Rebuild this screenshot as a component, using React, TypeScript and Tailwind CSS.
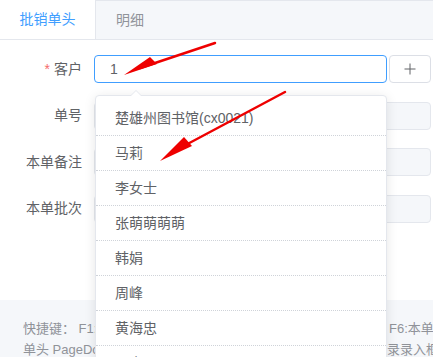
const font = { fontFamily: '"Liberation Sans", "Noto Sans CJK SC", sans-serif' };

const options = ["楚雄州图书馆(cx0021)", "马莉", "李女士", "张萌萌萌萌", "韩娟", "周峰", "黄海忠", "王小明"];

function Row({ label, required, children }: { label: string; required?: boolean; children: React.ReactNode }) {
  return (
    <div className="flex items-center h-[28px]">
      <div className="w-[94px] pr-3 text-right text-[14px] text-[#606266]">
        {required && <span className="text-[#f56c6c] mr-1">*</span>}
        {label}
      </div>
      {children}
    </div>
  );
}

export default function App() {
  return (
    <div className="relative w-[433px] h-[357px] overflow-hidden bg-white" style={font}>
      {/* tabs */}
      <div className="flex h-[40px] border-b border-[#e4e7ed]">
        <div className="w-[95px] flex items-center justify-center text-[14px] text-[#409eff] bg-white">批销单头</div>
        <div className="flex-1 flex items-center bg-[#f5f7fa] border-l border-t border-[#e4e7ed] pl-[20px] text-[14px] text-[#909399]">
          明细
        </div>
      </div>

      {/* form */}
      <div className="h-[260px] pt-[15px] flex flex-col gap-[18.5px]">
        <Row label="客户" required>
          <div className="w-[293px] h-[28px] border border-[#409eff] rounded flex items-center pl-[15px] text-[14px] text-[#606266]">
            1
          </div>
          <div className="ml-[2px] w-[42px] h-[28px] border border-[#dcdfe6] rounded flex items-center justify-center">
            <svg width="12" height="12" viewBox="0 0 12 12">
              <path d="M6 0.5V11.5M0.5 6H11.5" stroke="#606266" strokeWidth="1" />
            </svg>
          </div>
        </Row>
        <Row label="单号">
          <div className="w-[337px] h-[28px] bg-[#f5f7fa] border border-[#e4e7ed] rounded" />
        </Row>
        <Row label="本单备注">
          <div className="w-[337px] h-[28px] bg-[#f5f7fa] border border-[#e4e7ed] rounded" />
        </Row>
        <Row label="本单批次">
          <div className="w-[337px] h-[28px] bg-[#f5f7fa] border border-[#e4e7ed] rounded" />
        </Row>
      </div>

      {/* footer */}
      <div className="h-[57px] bg-[#f5f7fa] pt-[18px] pl-[23px] text-[13px] leading-[21px] text-[#909399] whitespace-nowrap">
        <div className="flex">
          <span className="w-[366px] shrink-0 overflow-hidden">快捷键： F1:新增 F2:保存 F3:审核 F4:打印 F5:启用</span>
          <span className="shrink-0">F6:本单备注</span>
        </div>
        <div className="flex">
          <span className="w-[364px] shrink-0 overflow-hidden">单头 PageDown:切换到明细 回车:跳到明细记</span>
          <span className="shrink-0">录录入框</span>
        </div>
      </div>

      {/* dropdown */}
      <div className="absolute left-[95px] top-[95px] w-[292px] bg-white border border-[#e4e7ed] rounded shadow-[0_2px_12px_rgba(0,0,0,0.1)] pt-[5px]">
        <div className="absolute -top-[6px] left-[34px] w-0 h-0 border-l-[6px] border-r-[6px] border-b-[6px] border-l-transparent border-r-transparent border-b-[#e4e7ed]" />
        <div className="absolute -top-[5px] left-[34px] w-0 h-0 border-l-[6px] border-r-[6px] border-b-[6px] border-l-transparent border-r-transparent border-b-white" />
        {options.map((o) => (
          <div key={o} className="h-[35px] flex items-center pl-[19px] text-[14px] text-[#606266] border-b border-dotted border-[#cfd3d9]">
            {o}
          </div>
        ))}
      </div>

      {/* annotation arrows */}
      <svg className="absolute inset-0 pointer-events-none" width="433" height="357">
        <line x1="215" y1="43" x2="140" y2="68" stroke="#ee0000" strokeWidth="2.5" strokeLinecap="round" />
        <polygon points="124,75 150,57 157,64" fill="#ee0000" />
        <line x1="285" y1="92" x2="180" y2="148" stroke="#ee0000" strokeWidth="2.5" strokeLinecap="round" />
        <polygon points="160,161 184,137 192,146" fill="#ee0000" />
      </svg>
    </div>
  );
}
